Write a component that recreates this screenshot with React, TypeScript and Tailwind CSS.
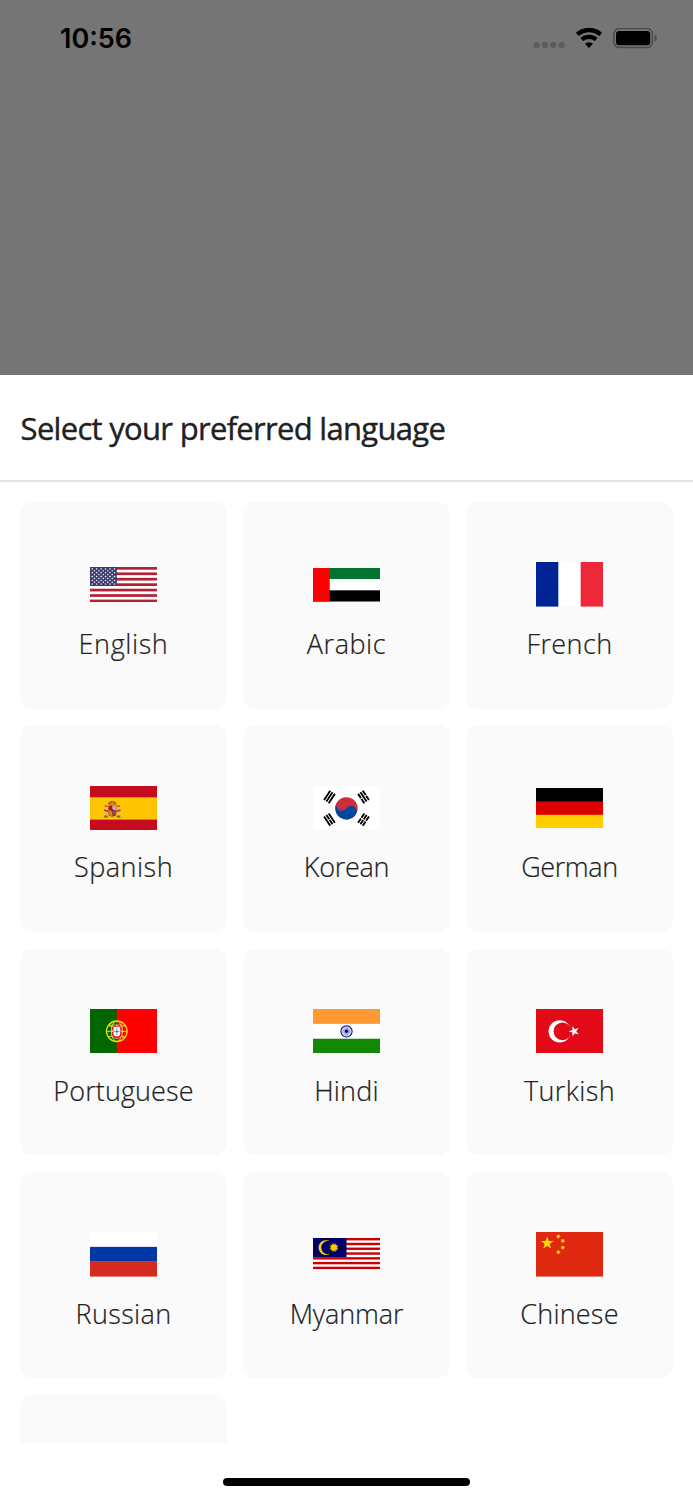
import type { ReactNode } from 'react';

type Point = [number, number];

function starPoints(cx: number, cy: number, outer: number, inner: number, tips = 5, turn = 0): string {
  const pts: Point[] = [];
  for (let i = 0; i < tips * 2; i++) {
    const r = i % 2 === 0 ? outer : inner;
    const a = ((turn - 90) * Math.PI) / 180 + (i * Math.PI) / tips;
    pts.push([cx + r * Math.cos(a), cy + r * Math.sin(a)]);
  }
  return pts.map(([x, y]) => `${x.toFixed(2)},${y.toFixed(2)}`).join(' ');
}

function Flag({ height, box, children }: { height: number; box: string; children: ReactNode }) {
  return (
    <svg width="67" height={height} viewBox={box} preserveAspectRatio="none" className="block shrink-0" aria-hidden="true">
      {children}
    </svg>
  );
}

function UsFlag() {
  const rows = [0, 1, 2, 3, 4, 5, 6, 7, 8];
  return (
    <Flag height={35.3} box="0 0 247 130">
      <rect width="247" height="130" fill="#fff" />
      {[0, 20, 40, 60, 80, 100, 120].map((y) => (
        <rect key={y} y={y} width="247" height="10" fill="#b22234" />
      ))}
      <rect width="98.8" height="70" fill="#3c3b6e" />
      {rows.map((r) =>
        Array.from({ length: r % 2 === 0 ? 6 : 5 }, (_, c) => (
          <polygon
            key={`${r}-${c}`}
            points={starPoints(8.2 + c * 16.4 + (r % 2 === 0 ? 0 : 8.2), 7 + r * 7, 4.2, 1.9)}
            fill="#fff"
          />
        )),
      )}
    </Flag>
  );
}

function UaeFlag() {
  return (
    <Flag height={33.5} box="0 0 12 6">
      <rect width="12" height="2" fill="#00732f" />
      <rect y="2" width="12" height="2" fill="#fff" />
      <rect y="4" width="12" height="2" fill="#000" />
      <rect width="3" height="6" fill="#f00" />
    </Flag>
  );
}

function FranceFlag() {
  return (
    <Flag height={44.6} box="0 0 3 2">
      <rect width="3" height="2" fill="#fff" />
      <rect width="1" height="2" fill="#002395" />
      <rect x="2" width="1" height="2" fill="#ed2939" />
    </Flag>
  );
}

function SpainFlag() {
  return (
    <Flag height={44.6} box="0 0 67 44.6">
      <rect width="67" height="44.6" fill="#c60b1e" />
      <rect y="11.3" width="67" height="22.3" fill="#ffc400" />
      <g>
        <path d="M15.2 21h1.7v9h-1.7zM27.6 21h1.7v9h-1.7z" fill="#c9bda8" />
        <path d="M14.7 19.2h2.7v1.7h-2.7zM27.1 19.2h2.7v1.7h-2.7z" fill="#b5652f" />
        <path d="M14.2 29.6h3.6v1.8h-3.6zM26.7 29.6h3.6v1.8h-3.6z" fill="#7b6a55" />
        <path d="M14 23.2l4 1.4v1.7l-4-1.2zM30.5 23.2l-4 1.4v1.7l4-1.2z" fill="#c43b2c" />
        <path d="M18.2 18.6q-.8-2 1-2.5 1.5-1.3 3.1-1.2 1.6-.1 3 1.2 1.8.5 1 2.5z" fill="#a5502a" />
        <path d="M19.5 17.2h5.8M22.3 14.7v3.6" stroke="#d99a20" strokeWidth=".8" />
        <path d="M18.4 19.5h7.9v7.6q0 3.5-4 3.5t-3.9-3.5z" fill="#ad1519" />
        <path d="M22.3 19.8h3.6v4.4h-3.6z" fill="#d7a7b4" />
        <path d="M18.8 24.3h3.5v5.8q-3.5-.2-3.5-3.2z" fill="#d98324" />
        <path d="M22.3 24.3h3.6v2.8q0 2.8-3.6 3z" fill="#9b4a3a" />
        <circle cx="22.3" cy="24.4" r="1.4" fill="#3f4680" />
      </g>
    </Flag>
  );
}

function KoreaFlag() {
  return (
    <Flag height={44.6} box="-36 -24 72 48">
      <rect x="-36" y="-24" width="72" height="48" fill="#fff" />
      <g transform="rotate(-56.31)">
        <path d="M-6-25H6M-6-22H6M-6-19H6M-6 19H6M-6 22H6M-6 25H6" stroke="#000" strokeWidth="2" />
        <path d="M0 17v10" stroke="#fff" />
        <circle r="12" fill="#cd2e3a" />
        <path d="M0-12A6 6 0 0 0 0 0A6 6 0 0 1 0 12A12 12 0 0 1 0-12Z" fill="#0047a0" />
      </g>
      <g transform="rotate(-123.69)">
        <path d="M-6-25H6M-6-22H6M-6-19H6M-6 19H6M-6 22H6M-6 25H6" stroke="#000" strokeWidth="2" />
        <path d="M0-23.5v3M0 17v3.5M0 23.5v3" stroke="#fff" />
      </g>
    </Flag>
  );
}

function GermanyFlag() {
  return (
    <Flag height={40.2} box="0 0 5 3">
      <rect width="5" height="3" fill="#000" />
      <rect y="1" width="5" height="2" fill="#d00" />
      <rect y="2" width="5" height="1" fill="#ffce00" />
    </Flag>
  );
}

function PortugalFlag() {
  return (
    <Flag height={44.6} box="0 0 67 44.6">
      <rect width="67" height="44.6" fill="#f00" />
      <rect width="26.8" height="44.6" fill="#060" />
      <g fill="none" stroke="#e8e010">
        <circle cx="26.8" cy="22.3" r="10.3" strokeWidth="1.3" />
        <ellipse cx="26.8" cy="22.3" rx="5.4" ry="10.2" strokeWidth=".9" />
        <path d="M16.6 22.3h20.4M18.2 16.5q8.6 3.4 17.2 0M18.2 28.1q8.6-3.4 17.2 0M19.5 15l14.5 14.8" strokeWidth="1" />
      </g>
      <path d="M21.6 15.9h10.4v8.4q0 5-5.2 5.2-5.2-.2-5.2-5.2z" fill="#e30b17" stroke="#fff" strokeWidth=".5" />
      <path d="M23.4 17.8h6.8v6.4q0 3.2-3.4 3.4-3.4-.2-3.4-3.4z" fill="#fff" />
      <path d="M26.2 19.4h1.2v1.1h-1.2zM25.7 21.4h2.2v2.2h-2.2zM26.2 24.5h1.2v1.1h-1.2zM24.3 21.9h.9v1.2h-.9zM28.4 21.9h.9v1.2h-.9z" fill="#3a64b0" />
      <path d="M22 16.3h1.2v1.4H22zM26.2 16.1h1.2v1.2h-1.2zM30.4 16.3h1.2v1.4h-1.2zM22 21.6h1v1.4h-1zM30.6 21.6h1v1.4h-1z" fill="#f6e51c" />
    </Flag>
  );
}

function IndiaFlag() {
  return (
    <Flag height={44.6} box="0 0 225 150">
      <rect width="225" height="150" fill="#fff" />
      <rect width="225" height="50" fill="#f93" />
      <rect y="100" width="225" height="50" fill="#128807" />
      <g transform="translate(112.5 75)" stroke="#000088">
        <circle r="18.9" fill="none" strokeWidth="3.4" />
        <circle r="5" fill="#000088" stroke="none" />
        {Array.from({ length: 24 }, (_, i) => (
          <path key={i} d="M0 0V-16" strokeWidth=".9" transform={`rotate(${i * 15})`} />
        ))}
      </g>
    </Flag>
  );
}

function TurkeyFlag() {
  return (
    <Flag height={44.6} box="0 0 1200 800">
      <rect width="1200" height="800" fill="#e30a17" />
      <circle cx="425" cy="400" r="200" fill="#fff" />
      <circle cx="475" cy="400" r="160" fill="#e30a17" />
      <polygon points="583.3,400 764.2,458.8 652.4,304.9 652.4,495.1 764.2,341.2" fill="#fff" />
    </Flag>
  );
}

function RussiaFlag() {
  return (
    <Flag height={44.6} box="0 0 9 6">
      <rect width="9" height="3" fill="#fff" />
      <rect y="2" width="9" height="2" fill="#0039a6" />
      <rect y="4" width="9" height="2" fill="#d52b1e" />
    </Flag>
  );
}

function MalaysiaFlag() {
  return (
    <Flag height={33.5} box="0 0 56 28">
      <rect width="56" height="28" fill="#fff" />
      {[0, 4, 8, 12, 16, 20, 24].map((y) => (
        <rect key={y} y={y} width="56" height="2" fill="#c00" />
      ))}
      <rect width="28" height="16" fill="#006" />
      <path d="M14.2 2.8A6.2 6.2 0 1 0 14.2 13.2A5.5 5.5 0 1 1 14.2 2.8Z" fill="#fc0" />
      <polygon points={starPoints(17.5, 8, 4.1, 2.4, 14)} fill="#fc0" />
    </Flag>
  );
}

function ChinaFlag() {
  return (
    <Flag height={44.6} box="0 0 30 20">
      <rect width="30" height="20" fill="#de2910" />
      <polygon points={starPoints(5, 5, 3, 1.15)} fill="#ffde00" />
      <polygon points={starPoints(10, 2, 1.1, 0.55, 5, 23)} fill="#ffde00" />
      <polygon points={starPoints(12, 4, 1.1, 0.55, 5, 46)} fill="#ffde00" />
      <polygon points={starPoints(12, 7, 1.1, 0.55, 5, 0)} fill="#ffde00" />
      <polygon points={starPoints(10, 9, 1.1, 0.55, 5, 21)} fill="#ffde00" />
    </Flag>
  );
}

interface Language {
  name: string;
  flag: ReactNode;
  tracking: string;
}

const languages: Language[] = [
  { name: 'English', flag: <UsFlag />, tracking: 'tracking-[0.6px]' },
  { name: 'Arabic', flag: <UaeFlag />, tracking: 'tracking-[0.55px]' },
  { name: 'French', flag: <FranceFlag />, tracking: 'tracking-[0.4px]' },
  { name: 'Spanish', flag: <SpainFlag />, tracking: 'tracking-[0.5px]' },
  { name: 'Korean', flag: <KoreaFlag />, tracking: 'tracking-[-0.3px]' },
  { name: 'German', flag: <GermanyFlag />, tracking: 'tracking-[-0.4px]' },
  { name: 'Portuguese', flag: <PortugalFlag />, tracking: 'tracking-[0.1px]' },
  { name: 'Hindi', flag: <IndiaFlag />, tracking: 'tracking-[0.2px]' },
  { name: 'Turkish', flag: <TurkeyFlag />, tracking: 'tracking-[0.4px]' },
  { name: 'Russian', flag: <RussiaFlag />, tracking: 'tracking-[0.35px]' },
  { name: 'Myanmar', flag: <MalaysiaFlag />, tracking: 'tracking-[-0.15px]' },
  { name: 'Chinese', flag: <ChinaFlag />, tracking: 'tracking-[0.2px]' },
];

function StatusBar() {
  return (
    <div className="flex h-[76px] items-center justify-between pr-9 pl-[60px]">
      <span className="font-['Inter',sans-serif] text-[27px] leading-none font-semibold text-black">10:56</span>
      <div className="flex h-[21px] items-start">
        <svg width="32" height="21" viewBox="0 0 32 21" className="mr-[11px]" fill="#5d5d5d" aria-hidden="true">
          <rect x=".6" y="14" width="6" height="6" rx="2" />
          <rect x="8.9" y="14" width="6" height="6" rx="2" />
          <rect x="17.2" y="14" width="6" height="6" rx="2" />
          <rect x="25.6" y="14" width="6" height="6" rx="2" />
        </svg>
        <svg width="27" height="21" viewBox="0 0 27 21" className="mr-[10px]" fill="none" stroke="#000" aria-hidden="true">
          <path d="M1.3 6.3A17.9 17.9 0 0 1 24.7 6.3" strokeWidth="4.4" />
          <path d="M5.8 11.5A11 11 0 0 1 20.2 11.5" strokeWidth="4.2" />
          <path d="M13 19.9L9 15.7A6 6 0 0 1 17 15.7Z" fill="#000" stroke="none" />
        </svg>
        <svg width="44" height="21" viewBox="0 0 44 21" aria-hidden="true">
          <rect x=".8" y=".6" width="38.6" height="19" rx="5.6" fill="none" stroke="#4b4b4b" strokeWidth="1.5" />
          <rect x="3" y="3" width="34.2" height="14.3" rx="3.2" fill="#000" />
          <path d="M41.6 6.6q2.2 1 2.2 3.5t-2.2 3.5z" fill="#4b4b4b" />
        </svg>
      </div>
    </div>
  );
}

function LanguageCard({ name, flag, tracking }: Language) {
  return (
    <button type="button" className="flex h-[206.4px] flex-col items-center rounded-[12px] bg-[#fafafa] pt-[60.2px]">
      <span className="flex h-[44.6px] items-center justify-center">{flag}</span>
      <span
        className={`mt-[19.2px] text-[27px] leading-[36px] font-light text-[#212121] [-webkit-text-stroke:0.2px_#212121] ${tracking}`}
      >
        {name}
      </span>
    </button>
  );
}

export default function App() {
  return (
    <div className="flex h-[1500px] w-[693px] flex-col overflow-hidden bg-[#757575] font-['Open_Sans',sans-serif]">
      <div className="h-[375px] shrink-0">
        <StatusBar />
      </div>
      <section className="flex flex-1 flex-col bg-white">
        <header className="flex h-[107px] shrink-0 items-center border-b-2 border-[#e2e2e2] px-[20.6px] pt-[2px]">
          <h1 className="text-[31px] leading-none font-medium tracking-[-0.7px] whitespace-nowrap text-[#212121] [-webkit-text-stroke:0.4px_#212121]">
            Select your preferred language
          </h1>
        </header>
        <div className="h-[961px] shrink-0 overflow-hidden px-[20.4px] pt-[20.3px]">
          <div className="grid grid-cols-3 gap-[16.8px]">
            {languages.map((language) => (
              <LanguageCard key={language.name} {...language} />
            ))}
            <div className="h-[206.4px] rounded-[12px] bg-[#fafafa]" />
          </div>
        </div>
        <div className="mt-[34.7px] h-[8.6px] w-[247.5px] self-center rounded-full bg-black" />
      </section>
    </div>
  );
}
